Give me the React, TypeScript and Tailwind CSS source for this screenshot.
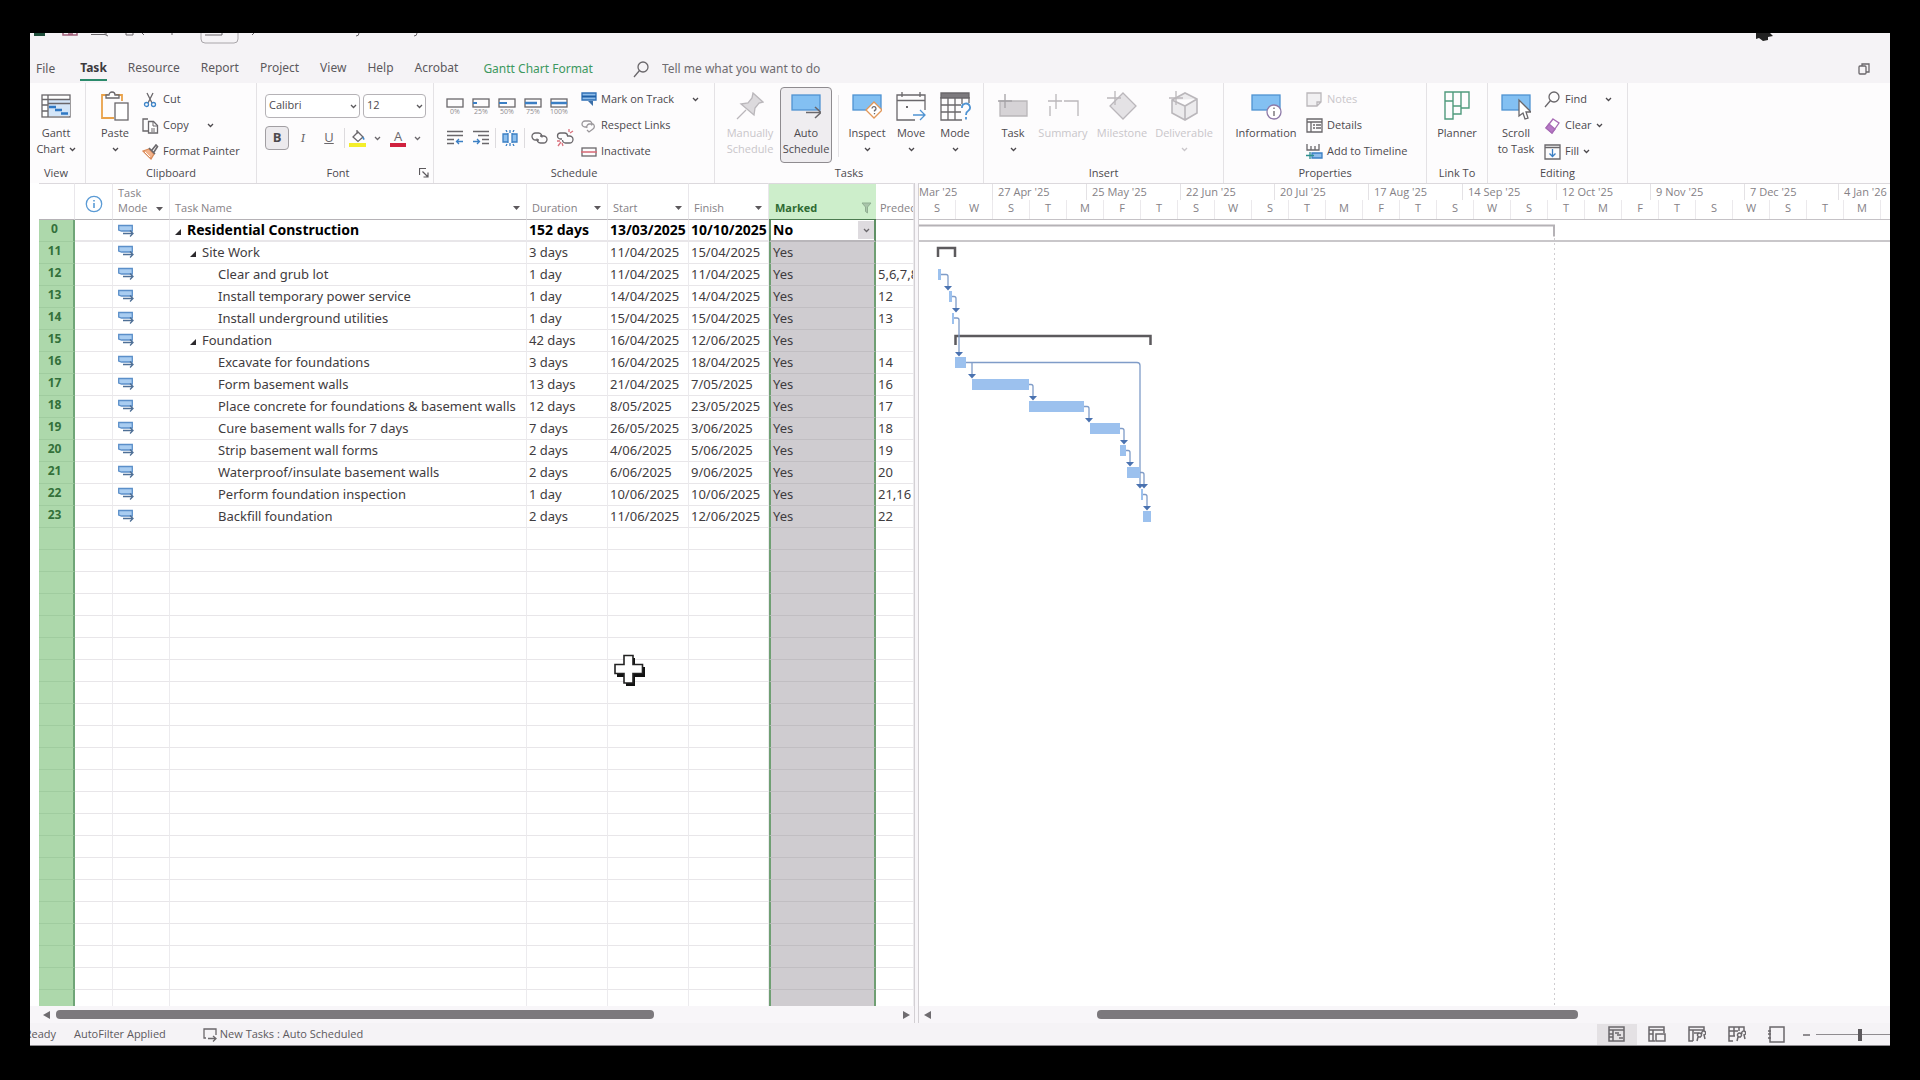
import type { ReactNode } from 'react';
import clsx from 'clsx';

type Task = {
  id: number;
  level: 0 | 1 | 2;
  name: string;
  duration: string;
  start: string;
  finish: string;
  marked: string;
  pred?: string;
};

const tasks: Task[] = [
  { id: 0, level: 0, name: 'Residential Construction', duration: '152 days', start: '13/03/2025', finish: '10/10/2025', marked: 'No' },
  { id: 11, level: 1, name: 'Site Work', duration: '3 days', start: '11/04/2025', finish: '15/04/2025', marked: 'Yes' },
  { id: 12, level: 2, name: 'Clear and grub lot', duration: '1 day', start: '11/04/2025', finish: '11/04/2025', marked: 'Yes', pred: '5,6,7,8' },
  { id: 13, level: 2, name: 'Install temporary power service', duration: '1 day', start: '14/04/2025', finish: '14/04/2025', marked: 'Yes', pred: '12' },
  { id: 14, level: 2, name: 'Install underground utilities', duration: '1 day', start: '15/04/2025', finish: '15/04/2025', marked: 'Yes', pred: '13' },
  { id: 15, level: 1, name: 'Foundation', duration: '42 days', start: '16/04/2025', finish: '12/06/2025', marked: 'Yes' },
  { id: 16, level: 2, name: 'Excavate for foundations', duration: '3 days', start: '16/04/2025', finish: '18/04/2025', marked: 'Yes', pred: '14' },
  { id: 17, level: 2, name: 'Form basement walls', duration: '13 days', start: '21/04/2025', finish: '7/05/2025', marked: 'Yes', pred: '16' },
  { id: 18, level: 2, name: 'Place concrete for foundations & basement walls', duration: '12 days', start: '8/05/2025', finish: '23/05/2025', marked: 'Yes', pred: '17' },
  { id: 19, level: 2, name: 'Cure basement walls for 7 days', duration: '7 days', start: '26/05/2025', finish: '3/06/2025', marked: 'Yes', pred: '18' },
  { id: 20, level: 2, name: 'Strip basement wall forms', duration: '2 days', start: '4/06/2025', finish: '5/06/2025', marked: 'Yes', pred: '19' },
  { id: 21, level: 2, name: 'Waterproof/insulate basement walls', duration: '2 days', start: '6/06/2025', finish: '9/06/2025', marked: 'Yes', pred: '20' },
  { id: 22, level: 2, name: 'Perform foundation inspection', duration: '1 day', start: '10/06/2025', finish: '10/06/2025', marked: 'Yes', pred: '21,16' },
  { id: 23, level: 2, name: 'Backfill foundation', duration: '2 days', start: '11/06/2025', finish: '12/06/2025', marked: 'Yes', pred: '22' },
];

const EMPTY_ROWS = 22;

const months = ["27 Apr '25", "25 May '25", "22 Jun '25", "20 Jul '25", "17 Aug '25", "14 Sep '25", "12 Oct '25", "9 Nov '25", "7 Dec '25", "4 Jan '26"];
const days = 'SWSTMFTSWSTMFTSWSTMFTSWSTM'.split('');

// x, width and row of every bar; `to` is where its link drops to the next row
const bars = [
  { row: 2, x: 19, w: 3, to: 29 },
  { row: 3, x: 30, w: 3, to: 37 },
  { row: 4, x: 33, w: 2 },
  { row: 6, x: 36, w: 11 },
  { row: 7, x: 53, w: 57, to: 114 },
  { row: 8, x: 110, w: 55, to: 170 },
  { row: 9, x: 171, w: 30, to: 205 },
  { row: 10, x: 201, w: 6, to: 211 },
  { row: 11, x: 208, w: 13, to: 225 },
  { row: 12, x: 222, w: 2, to: 228 },
  { row: 13, x: 224, w: 8 },
];

/* ---------- icons ---------- */

const Chevron = ({ className }: { className?: string }) => (
  <svg width="7" height="5" viewBox="0 0 7 5" fill="none" stroke="currentColor" strokeWidth="1.3" className={className} aria-hidden="true">
    <path d="M1 1l2.500 2.500L6 1" />
  </svg>
);

const Caret = ({ className }: { className?: string }) => (
  <svg width="7" height="4" viewBox="0 0 7 4" className={className} aria-hidden="true">
    <path d="M0 0h7L3.500 4z" fill="#5c585c" />
  </svg>
);

const Svg = ({ w, h, children }: { w: number; h: number; children: ReactNode }) => (
  <svg width={w} height={h} viewBox={`0 0 ${w} ${h}`} fill="none" stroke="#6a676b" strokeWidth="1.3" className="shrink-0" aria-hidden="true">
    {children}
  </svg>
);

const GanttIcon = () => (
  <Svg w={30} h={24}>
    <rect x="1" y="1" width="28" height="22" fill="#fff" />
    <path d="M7 6h22v16H7z" fill="#d3e5f8" stroke="none" />
    <path d="M1 5.500h28M7 1v22M1 11h6M1 17h6M7 9.500h22" />
    <path d="M8 13h7M14 16h7M20 19.500h7" stroke="#2f78c4" strokeWidth="2.500" />
  </Svg>
);

const PasteIcon = () => (
  <Svg w={30} h={30}>
    <path d="M8 4H2v23h12M16 4h6v6" stroke="#e9a24a" strokeWidth="1.800" />
    <path d="M6 7V4h3a3 3 0 0 1 6 0h4v3z" fill="#fff" />
    <rect x="15" y="12" width="13" height="17" fill="#fff" />
  </Svg>
);

const CutIcon = () => (
  <Svg w={17} h={16}>
    <path d="M5 1l5 10M11 1L6 11" />
    <circle cx="4.500" cy="12.500" r="2" stroke="#3f86c9" />
    <circle cx="11.500" cy="12.500" r="2" stroke="#3f86c9" />
  </Svg>
);

const CopyIcon = () => (
  <Svg w={17} h={16}>
    <path d="M6 13H1V1h5" />
    <path d="M6.500 3.500h5l4 4v7.500h-9z" fill="#fff" />
    <path d="M11 4v4h4.500M9 11h4M9 13h4" strokeWidth="1" />
  </Svg>
);

const PainterIcon = () => (
  <Svg w={17} h={16}>
    <path d="M1 7l6-2 5 5-3 5z" fill="#f2b38c" stroke="#d98a58" />
    <path d="M7 4l6 6M10 6l4-5 1.500 1.500L12 8" strokeWidth="1.600" />
    <path d="M3 8l5 5" stroke="#fff" strokeWidth="1" />
  </Svg>
);

const FillIcon = () => (
  <Svg w={17} h={18}>
    <path d="M4 8l5-5 5 5-5 4.500zM8 1v4" />
    <path d="M14 8c2 3 0 3 0 0" stroke="#3f86c9" />
    <path d="M0 14h17v4H0z" fill="#f4ee2a" stroke="none" />
  </Svg>
);

const PercentIcon = ({ fill }: { fill: number }) => (
  <Svg w={18} h={10}>
    <rect x="1" y="1" width="16" height="8" />
    <path d={`M1 5h${fill}`} stroke="#3b7fc4" strokeWidth={fill > 10 ? 2.5 : 2} />
  </Svg>
);

const OutdentIcon = () => (
  <Svg w={16} h={16}>
    <path d="M0 1.500h16M0 5.500h16M0 9.500h7M0 13.500h7" />
    <path d="M16 11.500h-6M12 9l-2.500 2.500L12 14" stroke="#3b7fc4" />
  </Svg>
);

const IndentIcon = () => (
  <Svg w={16} h={16}>
    <path d="M0 1.500h16M5 5.500h11M9 9.500h7M9 13.500h7" />
    <path d="M0 11.500h6M4 9l2.500 2.500L4 14" stroke="#3b7fc4" />
  </Svg>
);

const SplitIcon = () => (
  <Svg w={16} h={16}>
    <path d="M6 4H1v8h5M10 4h5v8h-5" fill="#8fc0ee" stroke="#3b7fc4" />
    <path d="M8 0v3M8 13v3M4 0l1 2M12 0l-1 2M4 16l1-2M12 16l-1-2" stroke="#3b7fc4" />
    <path d="M6 3v10M10 3v10" stroke="#3b7fc4" />
  </Svg>
);

const LinkIcon = () => (
  <Svg w={17} h={14}>
    <path d="M8 9H4.500a3.500 3.500 0 0 1 0-7h3a3.500 3.500 0 0 1 3.300 4.500" />
    <path d="M9 5h3.500a3.500 3.500 0 0 1 0 7h-3a3.500 3.500 0 0 1-3.300-4.500" />
  </Svg>
);

const UnlinkIcon = () => (
  <Svg w={18} h={18}>
    <path d="M6 10H4.500a3 3 0 0 1 0-6h4a3 3 0 0 1 3 3M11 7h2.500a3 3 0 0 1 0 7h-4a3 3 0 0 1-3-3" />
    <path d="M13 0v3M17 2l-3 2M1 12h3M2 17l3-4M7 17l-1-3" stroke="#d9707c" />
  </Svg>
);

const TrackIcon = () => (
  <Svg w={16} h={15}>
    <path d="M1 1h14v7H1z" fill="#8fbdea" stroke="#2f6fb5" />
    <path d="M1 4.500h14" stroke="#1f5fa6" strokeWidth="2" />
    <path d="M12 6v8l-5-5h5" fill="#3b6fa8" stroke="none" />
  </Svg>
);

const RespectIcon = () => (
  <Svg w={16} h={14}>
    <path d="M6 8H4a3 3 0 0 1 0-6h4a3 3 0 0 1 2.500 4.500" stroke="#9a979b" />
    <path d="M6 9a3 3 0 0 1 2-4h4a3 3 0 0 1 0 5l-4 3-2-2" stroke="#9a979b" />
  </Svg>
);

const InactivateIcon = () => (
  <Svg w={16} h={10}>
    <rect x="1" y="1" width="14" height="8" />
    <path d="M0 5h16" stroke="#d9707c" strokeWidth="1.600" />
  </Svg>
);

const PinIcon = () => (
  <Svg w={28} h={28}>
    <path d="M1 27l9-9" stroke="#bab7bb" />
    <path d="M17 1l10 9-4 1-4 5-1 7L5 12l7-1 4-5z" fill="#dcdadd" stroke="#bab7bb" />
  </Svg>
);

const AutoIcon = () => (
  <Svg w={30} h={26}>
    <rect x="1" y="2" width="28" height="15" fill="#83c0f2" stroke="#4f93d2" />
    <path d="M15 19.500h14M24 14l6 5.500L24 25" strokeWidth="1.600" />
  </Svg>
);

const InspectIcon = () => (
  <Svg w={30} h={26}>
    <rect x="1" y="2" width="28" height="15" fill="#83c0f2" stroke="#4f93d2" />
    <path d="M22 9l8 8-8 8-8-8z" fill="#fff" stroke="#e2985a" />
    <path d="M20 15.500a2 2 0 1 1 2.500 2v1M22.500 20v1.200" />
  </Svg>
);

const MoveIcon = () => (
  <Svg w={31} h={29}>
    <path d="M19 28H1V3h28v15M1 8.500h28M6 0v5M24 0v5" />
    <path d="M10 15h2" strokeWidth="2" />
    <path d="M17 23h12M24 18l5 5-5 5" stroke="#4f93d2" />
  </Svg>
);

const ModeIcon = () => (
  <Svg w={31} h={29}>
    <path d="M1 1h28v5H1z" fill="#7d7a7e" />
    <path d="M22 28H1V5M29 5v6M1 13h20M1 20h20M8 6v22M15 6v22M22 6v6" />
    <path d="M22 16a4 4 0 1 1 6 3c-2 1-2 2-2 4M26 25v2.500" stroke="#4f93d2" strokeWidth="1.800" />
  </Svg>
);

const InsertTaskIcon = () => (
  <Svg w={30} h={24}>
    <path d="M2 7h27v15H2z" fill="#d6d3d6" stroke="#b9b6b9" />
    <path d="M7 0v14M0 7h14" stroke="#a5a2a6" />
  </Svg>
);

const SummaryIcon = () => (
  <Svg w={31} h={24}>
    <path d="M2 22V12M16 7h14v15" stroke="#bab7bb" />
    <path d="M8 0v15M0 7h14" stroke="#bab7bb" />
  </Svg>
);

const MilestoneIcon = () => (
  <Svg w={30} h={30}>
    <path d="M16 2l13 13-13 13L3 15z" fill="#e4e2e5" stroke="#bab7bb" />
    <path d="M8 0v14M0 7h14" stroke="#bab7bb" />
  </Svg>
);

const DeliverableIcon = () => (
  <Svg w={30} h={30}>
    <path d="M3 9l13-7 12 6v14l-12 7-13-7zM3 9l13 6 12-7M16 15v14" fill="#ecebed" stroke="#bab7bb" strokeWidth="1.600" />
    <path d="M7 0v14M0 7h14" stroke="#bab7bb" />
  </Svg>
);

const InfoTaskIcon = () => (
  <Svg w={31} h={27}>
    <rect x="1" y="2" width="28" height="15" fill="#83c0f2" stroke="#4f93d2" />
    <circle cx="23" cy="19" r="7" fill="#fff" stroke="#8e7aa8" />
    <path d="M23 18v5M23 14.500v1.500" />
  </Svg>
);

const NotesIcon = () => (
  <Svg w={17} h={15}>
    <path d="M1 1h14v9l-4 4H1zM11 14v-4h4" fill="#f1f0f2" stroke="#bab7bb" />
  </Svg>
);

const DetailsIcon = () => (
  <Svg w={17} h={15}>
    <path d="M1 1h15v13H1zM1 4h15M5 4v10M10 7h5M10 10h5M7 7h2M7 10h2" />
  </Svg>
);

const TimelineIcon = () => (
  <Svg w={17} h={17}>
    <path d="M1 1v6h12V1M5 3v4M9 3v4" />
    <path d="M6 10h10v5H6z" fill="#8fbdea" stroke="#3b7fc4" />
    <path d="M4 9v7M0 12.500h8" stroke="#2c8f8f" />
  </Svg>
);

const PlannerIcon = () => (
  <Svg w={26} h={30}>
    <path d="M1 1h8v9H1zM9 1h8v14H9zM17 1h8v16h-8zM1 10h8v18H1zM9 15h8v8H9z" stroke="#4f9a7c" strokeWidth="1.400" />
  </Svg>
);

const ScrollIcon = () => (
  <Svg w={30} h={27}>
    <rect x="1" y="2" width="28" height="15" fill="#83c0f2" stroke="#4f93d2" />
    <path d="M18 7v16l4-3 2 6 3-1-2-6h5z" fill="#fff" />
  </Svg>
);

const FindIcon = () => (
  <Svg w={17} h={17}>
    <circle cx="10" cy="6" r="5" />
    <path d="M6.500 9.500L1 16" />
  </Svg>
);

const ClearIcon = () => (
  <Svg w={17} h={16}>
    <path d="M9 1l6 4-7 10-6-5z" fill="#fff" stroke="#a76bb5" />
    <path d="M5 6l6 5-3 4-6-5z" fill="#b778c6" stroke="#a76bb5" />
  </Svg>
);

const FillDownIcon = () => (
  <Svg w={17} h={16}>
    <path d="M1 1h15v14H1zM1 3.500h15" />
    <path d="M8.500 5v7M5.500 9.500l3 3 3-3" stroke="#3b7fc4" />
  </Svg>
);

const AutoModeIcon = () => (
  <svg width="16" height="13" viewBox="0 0 16 13" fill="none" className="block" aria-hidden="true">
    <path d="M.7 1.500h13.600v5.500H3.500L.7 6z" fill="#a9cdf1" stroke="#5b8fc9" strokeWidth="1.300" />
    <path d="M5 9.500h10M12 6.500l3 3-3 3" stroke="#4e6f96" strokeWidth="1.300" />
  </svg>
);

/* ---------- ribbon ---------- */

type GroupProps = { label: string; className: string; launcher?: boolean; children: ReactNode };

const Group = ({ label, className, launcher, children }: GroupProps) => (
  <section className={clsx('flex shrink-0 flex-col pt-1 pb-[2px] border-r border-[#e4e2e5]', className)}>
    <div className="flex h-[78px]">{children}</div>
    <div className="flex h-4 items-center">
      <h2 className="flex-1 text-center text-[11px] leading-4 text-[#4c494d]">{label}</h2>
      {launcher && (
        <button aria-label={`${label} settings`} className="w-[14px] text-[#5c595d]">
          <svg width="10" height="10" viewBox="0 0 10 10" fill="none" stroke="currentColor" aria-hidden="true">
            <path d="M.5 7V.5H7M3.500 3.500l5 5M9 4.500V9H4.500" strokeWidth="1.200" />
          </svg>
        </button>
      )}
    </div>
  </section>
);

type BigProps = { icon: ReactNode; lines: string[]; className: string; chevron?: boolean; disabled?: boolean; active?: boolean };

const BigButton = ({ icon, lines, className, chevron, disabled, active }: BigProps) => (
  <button
    disabled={disabled}
    className={clsx(
      'flex h-[76px] shrink-0 flex-col items-center rounded border pt-[3px] text-[11px] leading-4 whitespace-nowrap',
      active ? 'border-[#8f8c90] bg-[#efedf0]' : 'border-transparent',
      disabled ? 'text-[#c9c6ca]' : 'text-[#4c494d]',
      className,
    )}
  >
    <span className="mb-1 flex h-[30px] items-center">{icon}</span>
    {lines.map((line, i) => (
      <span key={line} className="flex items-center gap-1">
        {line}
        {chevron && i === 1 && <Chevron />}
      </span>
    ))}
    {chevron && lines.length === 1 && <Chevron className="mt-[6px]" />}
  </button>
);

type SmallProps = { icon: ReactNode; label: string; chevron?: 'near' | 'far'; disabled?: boolean };

const SmallButton = ({ icon, label, chevron, disabled }: SmallProps) => (
  <button
    disabled={disabled}
    className={clsx('flex h-[26px] items-center gap-1 pb-[1px] text-[11px] whitespace-nowrap', disabled ? 'text-[#c9c6ca]' : 'text-[#4c494d]')}
  >
    <span className="flex w-[17px] justify-center">{icon}</span>
    {label}
    {chevron && <Chevron className={chevron === 'far' ? 'ml-[14px]' : ''} />}
  </button>
);

const IconButton = ({ label, children }: { label: string; children: ReactNode }) => (
  <button aria-label={label} className="flex h-[26px] w-[26px] flex-col items-center justify-center">
    {children}
  </button>
);

const Picker = ({ label, value, className }: { label: string; value: string; className: string }) => (
  <div className={clsx('relative', className)}>
    <select
      aria-label={label}
      defaultValue={value}
      className="block h-6 w-full appearance-none rounded border border-[#b5b2b6] bg-white pb-[2px] pl-[3px] text-[11px] text-[#4c494d]"
    >
      <option>{value}</option>
    </select>
    <Chevron className="pointer-events-none absolute top-[10px] right-[3px] text-[#5c595d]" />
  </div>
);

const Ribbon = () => (
  <div className="flex h-[100px] shrink-0 overflow-hidden bg-[#fdfcfd]">
    <Group label="View" className="w-14 pr-[3px]">
      <BigButton className="w-[52px]" icon={<GanttIcon />} lines={['Gantt', 'Chart']} chevron />
    </Group>

    <Group label="Clipboard" className="w-[171px]">
      <BigButton className="ml-[2px] w-[54px]" icon={<PasteIcon />} lines={['Paste']} chevron />
      <div>
        <SmallButton icon={<CutIcon />} label="Cut" />
        <SmallButton icon={<CopyIcon />} label="Copy" chevron="far" />
        <SmallButton icon={<PainterIcon />} label="Format Painter" />
      </div>
    </Group>

    <Group label="Font" className="w-[177px]" launcher>
      <div className="flex flex-1 flex-col gap-2 px-2 pt-[7px]">
        <div className="flex gap-[3px]">
          <Picker label="Font" value="Calibri" className="w-[95px]" />
          <Picker label="Font Size" value="12" className="w-[63px]" />
        </div>
        <div className="flex items-center text-[13px] text-[#6a676b]">
          <button className="h-6 w-6 rounded border border-[#a19ea2] bg-[#eceaed] font-bold text-[#4c494d]">B</button>
          <button className="h-6 w-7 font-serif italic">I</button>
          <button className="h-6 w-6 underline">U</button>
          <span className="ml-[3px] h-5 border-l border-[#dddbde]" />
          <button aria-label="Background Color" className="flex h-6 w-10 items-center justify-center gap-2">
            <FillIcon />
            <Chevron />
          </button>
          <button className="flex h-6 flex-1 items-center justify-center gap-2">
            <span className="w-4 border-b-4 border-[#d0213f] text-center leading-[14px]">A</span>
            <Chevron />
          </button>
        </div>
      </div>
    </Group>

    <Group label="Schedule" className="w-[281px]">
      <div className="flex flex-col gap-[1px] pt-[7px] pl-2">
        <div className="flex">
          {[['0%', 0], ['25%', 4], ['50%', 8], ['75%', 12], ['100%', 16]].map(([text, fill]) => (
            <IconButton key={text} label={`${text} Complete`}>
              <PercentIcon fill={Number(fill)} />
              <span className="text-[7px] leading-[8px] text-[#8f8c90]">{text}</span>
            </IconButton>
          ))}
        </div>
        <div className="flex items-center pt-[4px]">
          <IconButton label="Outdent Task"><OutdentIcon /></IconButton>
          <IconButton label="Indent Task"><IndentIcon /></IconButton>
          <span className="mx-[1px] h-5 border-l border-[#dddbde]" />
          <IconButton label="Split Task"><SplitIcon /></IconButton>
          <span className="mx-[1px] h-5 border-l border-[#dddbde]" />
          <IconButton label="Link Tasks"><LinkIcon /></IconButton>
          <IconButton label="Unlink Tasks"><UnlinkIcon /></IconButton>
        </div>
      </div>
      <div className="pl-[2px]">
        <SmallButton icon={<TrackIcon />} label="Mark on Track" chevron="far" />
        <SmallButton icon={<RespectIcon />} label="Respect Links" />
        <SmallButton icon={<InactivateIcon />} label="Inactivate" />
      </div>
    </Group>

    <Group label="Tasks" className="w-[269px]">
      <BigButton className="ml-2 w-[54px]" icon={<PinIcon />} lines={['Manually', 'Schedule']} disabled />
      <BigButton className="ml-[3px] w-[52px]" icon={<AutoIcon />} lines={['Auto', 'Schedule']} active />
      <span className="mx-[6px] my-2 border-l border-[#e4e2e5]" />
      <BigButton className="w-11" icon={<InspectIcon />} lines={['Inspect']} chevron />
      <BigButton className="w-11" icon={<MoveIcon />} lines={['Move']} chevron />
      <BigButton className="w-11" icon={<ModeIcon />} lines={['Mode']} chevron />
    </Group>

    <Group label="Insert" className="w-[240px]">
      <BigButton className="ml-2 w-[42px]" icon={<InsertTaskIcon />} lines={['Task']} chevron />
      <BigButton className="w-[58px]" icon={<SummaryIcon />} lines={['Summary']} disabled />
      <BigButton className="w-[60px]" icon={<MilestoneIcon />} lines={['Milestone']} disabled />
      <BigButton className="w-16" icon={<DeliverableIcon />} lines={['Deliverable']} chevron disabled />
    </Group>

    <Group label="Properties" className="w-[203px]">
      <BigButton className="ml-2 w-[68px]" icon={<InfoTaskIcon />} lines={['Information']} />
      <div className="pl-[6px]">
        <SmallButton icon={<NotesIcon />} label="Notes" disabled />
        <SmallButton icon={<DetailsIcon />} label="Details" />
        <SmallButton icon={<TimelineIcon />} label="Add to Timeline" />
      </div>
    </Group>

    <Group label="Link To" className="w-[61px]">
      <BigButton className="w-[60px]" icon={<PlannerIcon />} lines={['Planner']} />
    </Group>

    <Group label="Editing" className="w-[140px]">
      <BigButton className="w-[56px]" icon={<ScrollIcon />} lines={['Scroll', 'to Task']} />
      <div>
        <SmallButton icon={<FindIcon />} label="Find" chevron="far" />
        <SmallButton icon={<ClearIcon />} label="Clear" chevron="near" />
        <SmallButton icon={<FillDownIcon />} label="Fill" chevron="near" />
      </div>
    </Group>
  </div>
);

/* ---------- title and tabs ---------- */

const tabs = ['Task', 'Resource', 'Report', 'Project', 'View', 'Help', 'Acrobat'];

const TitleStrip = () => (
  <div className="flex h-5 shrink-0 items-start justify-between pr-[116px] pl-1">
    <svg width="430" height="12" viewBox="0 0 430 12" fill="none" stroke="#6a676b" aria-hidden="true">
      <path d="M0 0h11v3H0z" fill="#1e4d3a" stroke="none" />
      <path d="M29 0v2h14V0M34 1h5" stroke="#a0607a" strokeWidth="1.500" />
      <path d="M57 1.500h14M70 1l4 2M72 2V0M92 2h7V0M92 2V0" />
      <path d="M108 0l2 2M138 0v2" />
      <path d="M167 0v6q0 4 4 4h29q4 0 4-4V0" stroke="#a9a6aa" />
      <path d="M171 2h17V0" />
      <path d="M220 0l-2 2M325 0q0 3-3 3M383 0q0 3-3 3" />
    </svg>
    <svg width="20" height="8" viewBox="0 0 20 8" aria-hidden="true">
      <path d="M2 0h14l3 3-5 1v3l-5 1-4-3-3 1z" fill="#222" />
    </svg>
  </div>
);

const TabBar = () => (
  <nav className="flex h-[30px] shrink-0 items-center pt-[2px] pl-[6px] font-['Noto_Sans',sans-serif] text-[12px] whitespace-nowrap text-[#5c595d]">
    <button className="mr-[25px]">File</button>
    <div className="flex gap-[21px]">
      {tabs.map((tab) => (
        <button
          key={tab}
          className={clsx('h-6 border-b-2', tab === 'Task' ? 'border-[#2b8a6b] font-bold text-[#3c393d]' : 'border-transparent')}
        >
          {tab}
        </button>
      ))}
    </div>
    <button className="ml-[25px] text-[#3d9860]">Gantt Chart Format</button>
    <label className="ml-10 flex items-center gap-3 text-[#6f6c70]">
      <Svg w={17} h={17}>
        <circle cx="10" cy="6" r="5" />
        <path d="M6.500 9.500L1 16" />
      </Svg>
      <input
        aria-label="Tell me what you want to do"
        placeholder="Tell me what you want to do"
        className="w-[190px] bg-transparent placeholder:text-[#6f6c70]"
      />
    </label>
    <button aria-label="Restore Window" className="mr-5 ml-auto">
      <Svg w={12} h={12}>
        <rect x="1" y="3" width="7" height="8" rx="1" />
        <path d="M4 3V1h7v8H8" />
      </Svg>
    </button>
  </nav>
);

/* ---------- task table ---------- */

const headBase = 'overflow-hidden border-t border-r border-b border-t-[#dcd9dd] border-r-[#e9e7eb] border-b-[#b5b2b6] p-0 pb-1 align-bottom font-normal whitespace-nowrap';
const cellBase = 'overflow-hidden border-r border-b border-r-[#ecebee] border-b-[#e8e6e9] p-0 whitespace-nowrap';

const HeadCell = ({ label }: { label: string }) => (
  <th scope="col" className={headBase}>
    <div className="flex items-center justify-between pr-[6px] pl-[5px]">
      {label}
      <button aria-label={`Filter ${label}`}><Caret /></button>
    </div>
  </th>
);

type CellProps = { first?: boolean; className?: string; children?: ReactNode };

const Cell = ({ first, className, children }: CellProps) => (
  <td className={clsx(cellBase, first ? 'border-b-2 border-b-[#b9b6ba] font-bold text-black text-[14px]' : 'pb-[2px]', className)}>{children}</td>
);

const indent = ['pl-[5px]', 'pl-5', 'pl-12'];

const TaskTable = () => (
  <table className="w-full table-fixed border-separate border-spacing-0 text-left font-['Noto_Sans',sans-serif] text-[13px] leading-[18px] text-[#3f3c40]">
    <colgroup>
      <col className="w-9" />
      <col className="w-[38px]" />
      <col className="w-[57px]" />
      <col />
      <col className="w-[81px]" />
      <col className="w-[81px]" />
      <col className="w-[80px]" />
      <col className="w-[107px]" />
      <col className="w-[38px]" />
    </colgroup>
    <thead className="font-['Open_Sans',sans-serif] text-[11px] leading-[15px] text-[#858186]">
      <tr className="h-[37px]">
        <td className={headBase} />
        <th scope="col" className={headBase}>
          <svg width="18" height="18" viewBox="0 0 18 18" fill="none" stroke="#5b9bd5" strokeWidth="1.300" className="mx-auto mb-[2px]" role="img" aria-label="Indicators">
            <circle cx="9" cy="9" r="7.700" />
            <path d="M9 8v5M9 5v1.500" strokeWidth="1.600" />
          </svg>
        </th>
        <th scope="col" className={headBase}>
          <div className="flex items-end justify-between pr-[6px] pl-[5px]">
            <span>Task<br />Mode</span>
            <button aria-label="Filter Task Mode" className="mb-1"><Caret /></button>
          </div>
        </th>
        <HeadCell label="Task Name" />
        <HeadCell label="Duration" />
        <HeadCell label="Start" />
        <HeadCell label="Finish" />
        <th scope="col" className="border-t border-b border-t-[#dcd9dd] border-b-[#4c7a50] bg-[#cdeecb] p-0 pb-1 align-bottom">
          <div className="flex items-center justify-between pr-1 pl-[6px] text-[#2f6b33]">
            Marked
            <button aria-label="Filter Marked">
              <svg width="11" height="12" viewBox="0 0 11 12" fill="#a9c4aa" stroke="#8fae91" aria-hidden="true">
                <path d="M1 1h9L6.500 5v6l-2-1.500V5z" />
              </svg>
            </button>
          </div>
        </th>
        <th scope="col" className={headBase} aria-label="Predecessors"><div className="pl-1">Predec</div></th>
      </tr>
    </thead>
    <tbody>
      {tasks.map((t) => {
        const first = t.level === 0;
        return (
          <tr key={t.id} className="h-[22px]">
            <th scope="row" className="border-r-2 border-b border-r-[#6fa577] border-b-[#a0cc9f] bg-[#add8ab] p-0 pr-[3px] pb-1 text-center text-[12px] leading-[14px] font-bold text-[#33703a]">
              {t.id}
            </th>
            <Cell first={first} />
            <Cell first={first} className="pl-[5px]"><AutoModeIcon /></Cell>
            <Cell first={first} className={indent[t.level]}>
              {t.level < 2 && (
                <svg width="6" height="6" viewBox="0 0 6 6" className="mr-[6px] inline-block align-baseline" aria-hidden="true">
                  <path d="M6 0v6H0z" fill="#2c2a2d" />
                </svg>
              )}
              {t.name}
            </Cell>
            <Cell first={first} className="pl-[2px]">{t.duration}</Cell>
            <Cell first={first} className="pl-[2px]">{t.start}</Cell>
            <Cell first={first} className="pl-[2px]">{t.finish}</Cell>
            {first ? (
              <td className="border-x-2 border-b-2 border-x-[#5f9065] border-b-[#b9b6ba] bg-white p-0 pl-[2px] text-[14px] font-bold text-black">
                <div className="flex items-center justify-between">
                  No
                  <button aria-label="Change Marked" className="flex h-[18px] w-4 items-center justify-center bg-[#dedbdf] text-[#6a676b]"><Chevron /></button>
                </div>
              </td>
            ) : (
              <td className="border-x-2 border-b border-x-[#6f9f73] border-b-[#c1bec2] bg-[#cfccd0] p-0 pb-[2px] pl-[2px]">{t.marked}</td>
            )}
            <Cell first={first} className="pl-[2px]">{t.pred}</Cell>
          </tr>
        );
      })}
      {Array.from({ length: EMPTY_ROWS }, (_, i) => (
        <tr key={i} className="h-[22px]">
          <td className="border-r-2 border-b border-r-[#6fa577] border-b-[#a0cc9f] bg-[#add8ab]" />
          {[0, 1, 2, 3, 4, 5].map((c) => <Cell key={c} />)}
          <td className="border-x-2 border-b border-x-[#6f9f73] border-b-[#c1bec2] bg-[#cfccd0]" />
          <Cell />
        </tr>
      ))}
    </tbody>
  </table>
);

/* ---------- chart ---------- */

const barTop = (row: number) => 27 + (row - 1) * 22;

const Arrow = ({ x, y }: { x: number; y: number }) => <path d={`M${x - 4} ${y - 4}h8l-4 4.500z`} fill="#4a72b0" />;

const Chart = () => (
  <svg className="block h-full w-full" role="img" aria-label="Gantt chart">
    <path d="M0 5.500h635v11" fill="none" stroke="#b5b2b6" strokeWidth="2" />
    <path d="M0 21h3000" stroke="#c9c7ca" strokeWidth="2" />
    <path d="M635.500 18v3000" stroke="#cfcdd0" strokeDasharray="2 3" />
    <path d="M19 37v-9h17v9M36.500 125v-9h195v9" fill="none" stroke="#5c5a5d" strokeWidth="2.500" />
    <g fill="none" stroke="#7f9cc8" strokeWidth="1.300">
      <path d="M35 98h3q2 0 2 2v34M47 142.500h171q3 0 3 3v119M53 142.500v13" />
      {bars.map((b) => b.to && (
        <path key={b.row} d={`M${b.x + b.w} ${barTop(b.row) + 5.5}h${b.to - b.x - b.w - 2}q2 0 2 2v11`} />
      ))}
    </g>
    {bars.map((b) => (
      <g key={b.row}>
        <rect x={b.x} y={barTop(b.row)} width={b.w} height="11" fill="#9cc1ee" />
        {b.to && <Arrow x={b.to} y={barTop(b.row) + 21} />}
      </g>
    ))}
    <Arrow x={40} y={136} />
    <Arrow x={53} y={158} />
    <Arrow x={221} y={268} />
  </svg>
);

const Timescale = () => (
  <div className="h-[37px] shrink-0 overflow-hidden border-t border-b border-[#dcd9dd] border-b-[#c5c2c6] text-[11px] whitespace-nowrap text-[#858186]">
    <div className="flex h-4 leading-4">
      <div className="w-[73px] shrink-0">Mar '25</div>
      {months.map((m) => (
        <div key={m} className="w-[94px] shrink-0 border-l border-[#e4e2e5] pl-[5px]">{m}</div>
      ))}
    </div>
    <div className="flex h-5 leading-4">
      {days.map((d, i) => (
        <div key={i} className="w-[37px] shrink-0 border-r border-[#ebe9ec] text-center">{d}</div>
      ))}
    </div>
  </div>
);

/* ---------- scroll bars and status ---------- */

const ScrollArrow = ({ label, right }: { label: string; right?: boolean }) => (
  <button aria-label={label} className="flex w-4 shrink-0 justify-center">
    <svg width="7" height="8" viewBox="0 0 7 8" fill="#6f6c70" aria-hidden="true">
      <path d={right ? 'M0 0l7 4-7 4z' : 'M7 0L0 4l7 4z'} />
    </svg>
  </button>
);

const viewIcons: [string, string][] = [
  ['Gantt Chart', 'M1 1h15v14H1zM1 4h15M5 4v11M7 7h4M9 9h4M11 12h4M1 8h4M1 11h4'],
  ['Task Usage', 'M7 15H1V1h15v6M1 4h15M5 4v11M8 8h9v7H8zM1 8h4'],
  ['Team Planner', 'M5 15H1V1h15v4M1 4h15M5 4v11M6 7h5M9 15l1-4h3M11 11a2 2 0 1 1 1 0M14 8a2 2 0 1 1 2 1l1 4'],
  ['Resource Sheet', 'M5 15H1V1h15v4M1 5h9M6 1v9M11 1v4M1 10h6M9 15l1-4h3M11 11a2 2 0 1 1 1 0M14 8a2 2 0 1 1 2 1l1 4'],
  ['Report', 'M2 1h14v15H2zM0 5h3M0 8h3M0 12h3'],
];

const StatusBar = () => (
  <footer className="flex h-[22px] shrink-0 items-center overflow-hidden pt-[1px] text-[11px] whitespace-nowrap text-[#5c595d]">
    <span className="flex w-[26px] justify-end">Ready</span>
    <span className="ml-[18px]">AutoFilter Applied</span>
    <button className="ml-[35px] flex items-center gap-[3px]">
      <Svg w={16} h={14}>
        <path d="M5 10H3V1h12v6M7 10.500h8M12 8l3 2.500-3 3" />
      </Svg>
      New Tasks : Auto Scheduled
    </button>
    <div className="ml-auto flex h-full items-center">
      {viewIcons.map(([label, d], i) => (
        <button key={label} aria-label={label} className={clsx('flex h-full w-10 items-center justify-center', i === 0 && 'bg-[#e4e1e4]')}>
          <Svg w={18} h={17}><path d={d} strokeWidth="1.500" /></Svg>
        </button>
      ))}
      <button aria-label="Zoom Out" className="ml-[6px] w-[7px] border-b-2 border-[#8f8c90]" />
      <div className="ml-[6px] w-[74px] overflow-hidden">
        <input
          type="range"
          aria-label="Zoom"
          defaultValue={50}
          className="block h-3 w-[88px] appearance-none bg-[linear-gradient(#8f8c90,#8f8c90)] bg-[length:100%_1px] bg-center bg-no-repeat [&::-webkit-slider-thumb]:h-3 [&::-webkit-slider-thumb]:w-1 [&::-webkit-slider-thumb]:appearance-none [&::-webkit-slider-thumb]:bg-[#5c595d]"
        />
      </div>
    </div>
  </footer>
);

export default function App() {
  return (
    <div className="flex h-screen bg-black px-[30px] pt-[33px] pb-[34px] font-['Open_Sans',sans-serif]">
      <div className="relative flex min-w-0 flex-1 flex-col overflow-hidden border-b border-[#8f8c90] bg-[#f5f3f6]">
        <TitleStrip />
        <TabBar />
        <Ribbon />

        <main className="flex min-h-0 flex-1">
          <section className="flex w-[884px] shrink-0 flex-col" aria-label="Task sheet">
            <div className="min-h-0 flex-1 overflow-hidden bg-white pl-[9px]">
              <TaskTable />
            </div>
            <div className="flex h-[17px] items-center bg-[#f8f6f9] pl-2">
              <ScrollArrow label="Scroll left" />
              <div className="ml-[2px] h-[9px] w-[598px] rounded bg-[#7c797d]" />
              <div className="ml-auto"><ScrollArrow label="Scroll right" right /></div>
            </div>
          </section>

          <div className="w-[5px] shrink-0 border-r border-l border-[#d3d0d4] bg-[#f8f6f9]" />

          <section className="flex min-w-0 flex-1 flex-col bg-white" aria-label="Timeline">
            <Timescale />
            <div className="min-h-0 flex-1 overflow-hidden">
              <Chart />
            </div>
            <div className="flex h-[17px] items-center bg-[#f8f6f9]">
              <ScrollArrow label="Scroll chart left" />
              <div className="ml-[162px] h-[9px] w-[481px] rounded bg-[#7c797d]" />
            </div>
          </section>
        </main>

        <StatusBar />

        {/* sheet pointer */}
        <svg width="32" height="33" viewBox="0 0 32 33" className="pointer-events-none absolute top-[621px] left-[584px]" aria-hidden="true">
          <path d="M12 4h9v9h10v10H21v9h-9v-9H3V13h9z" fill="#111" />
          <path d="M10 1.500h9v9h9.500v9H19V29h-9v-9.500H1v-9h9z" fill="#fff" stroke="#222" strokeWidth="1.600" />
        </svg>
      </div>
    </div>
  );
}
